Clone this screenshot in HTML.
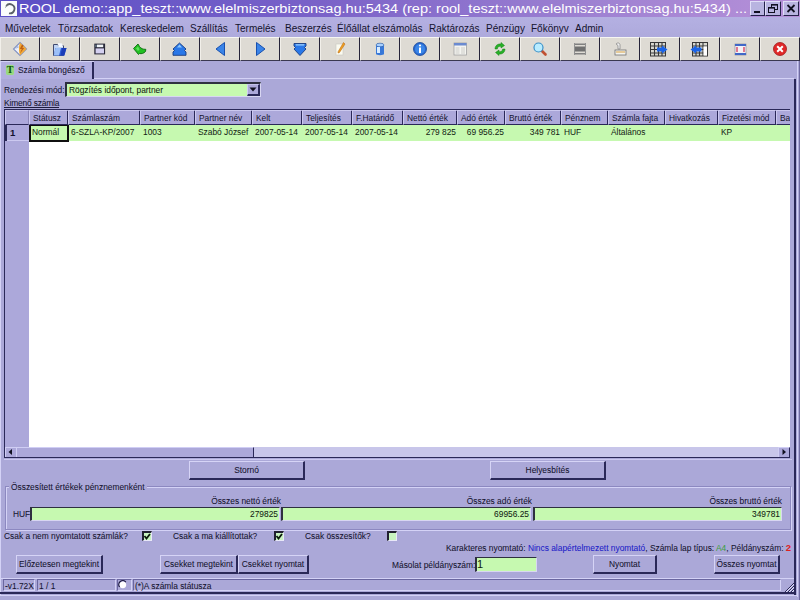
<!DOCTYPE html>
<html><head><meta charset="utf-8">
<style>
*{margin:0;padding:0;box-sizing:border-box}
html,body{width:800px;height:600px;overflow:hidden;background:#aba8d8;font-family:"Liberation Sans",sans-serif}
.a{position:absolute}
.t{position:absolute;font-size:8.4px;line-height:10px;color:#14132e;white-space:nowrap;-webkit-text-stroke:0.05px currentColor}
.btn{position:absolute;background:#aba8d8;border-top:1px solid #d6d4f6;border-left:1px solid #d6d4f6;border-right:2px solid #2a2858;border-bottom:2px solid #2a2858;font-size:8.4px;color:#14132e;text-align:center;line-height:16px;white-space:nowrap;-webkit-text-stroke:0.05px currentColor}
.tb{position:absolute;top:37px;width:40px;height:24px;background:#dedbd4;border-top:1px solid #f6f6f2;border-left:1px solid #f2f0ea;border-right:1px solid #26243a;border-bottom:1px solid #3a3850}
.tb svg{position:absolute;left:11px;top:4px}
.fld{position:absolute;background:#c6f9b0;border-top:1px solid #2e3040;border-left:2px solid #2e3040;border-bottom:1px solid #d8d6f2;border-right:1px solid #d8d6f2}
.hd{position:absolute;top:110px;height:15px;background:#aca8da;border-top:1px solid #ccc9f0;border-left:1px solid #ccc9f0;border-right:2px solid #2a2858;border-bottom:1px solid #2a2858}
.hd span{position:absolute;left:3px;top:2px;font-size:8.4px;line-height:10px;color:#14132e;white-space:nowrap}
.cell{position:absolute;top:127px;font-size:8.4px;line-height:10px;color:#122212;white-space:nowrap}
.cb{position:absolute;top:531px;width:10px;height:10px;background:#c8f4c0;border-top:2px solid #202030;border-left:2px solid #202030;border-right:1px solid #e8e8f8;border-bottom:1px solid #e8e8f8}
</style></head><body>

<!-- title bar -->
<div class="a" style="left:0;top:0;width:800px;height:17px;background:linear-gradient(to right,#5a4fc6 0%,#7a62c8 40%,#9f82d2 75%,#b690d8 100%)"></div>
<div class="a" style="left:1px;top:1px;width:16px;height:15px;background:#fafcfc"></div>
<svg class="a" style="left:1px;top:1px" width="16" height="15" viewBox="0 0 16 15"><path d="M5.2 5 A4.6 4.6 0 1 1 8 12.3" fill="none" stroke="#5a6068" stroke-width="1.8"/><path d="M4 6.5 L6.5 4.5" stroke="#8a9098" stroke-width="1"/></svg>
<div class="a" style="left:19px;top:2px;font-size:12px;line-height:14px;color:#fff;white-space:nowrap;transform-origin:0 0;transform:scaleX(1.211)">ROOL demo::app_teszt::www.elelmiszerbiztonsag.hu:5434 (rep: rool_teszt::www.elelmiszerbiztonsag.hu:5434) ...</div>
<div class="a" style="left:750px;top:1px;width:15px;height:15px;background:#b8b4e0;border-top:1px solid #e0def8;border-left:1px solid #e0def8;border-right:1px solid #24224a;border-bottom:1px solid #24224a"></div>
<div class="a" style="left:754px;top:11px;width:6px;height:2px;background:#101020"></div>
<div class="a" style="left:765px;top:1px;width:16px;height:15px;background:#b8b4e0;border-top:1px solid #e0def8;border-left:1px solid #e0def8;border-right:1px solid #24224a;border-bottom:1px solid #24224a"></div>
<svg class="a" style="left:765px;top:1px" width="16" height="15"><rect x="6.5" y="3.5" width="6" height="5" fill="none" stroke="#101020" stroke-width="1"/><rect x="6" y="3" width="7" height="1.6" fill="#101020"/><rect x="3.5" y="6.5" width="6" height="5" fill="#b8b4e0" stroke="#101020" stroke-width="1"/><rect x="3" y="6" width="7" height="1.6" fill="#101020"/></svg>
<div class="a" style="left:783px;top:1px;width:16px;height:15px;background:#b8b4e0;border-top:1px solid #e0def8;border-left:1px solid #e0def8;border-right:1px solid #24224a;border-bottom:1px solid #24224a"></div>
<svg class="a" style="left:783px;top:1px" width="16" height="15"><path d="M4.5 4 L11.5 11 M11.5 4 L4.5 11" stroke="#101020" stroke-width="1.8"/></svg>

<!-- menu bar -->
<div class="a" style="left:0;top:17px;width:800px;height:20px;background:linear-gradient(#b4b0e2,#aeaadc)"></div>
<div class="a" style="left:0;top:24px;font-size:10px;line-height:10px;color:#14132e;white-space:nowrap">
<span class="a" style="left:5px">Műveletek</span><span class="a" style="left:58px">Törzsadatok</span><span class="a" style="left:120px">Kereskedelem</span><span class="a" style="left:190px">Szállítás</span><span class="a" style="left:235px">Termelés</span><span class="a" style="left:285px">Beszerzés</span><span class="a" style="left:337px">Élőállat elszámolás</span><span class="a" style="left:429px">Raktározás</span><span class="a" style="left:486px">Pénzügy</span><span class="a" style="left:531px">Főkönyv</span><span class="a" style="left:575px">Admin</span>
</div>

<!-- toolbar -->
<div class="tb" style="left:0px"></div>
<svg class="a" style="left:12px;top:41px;overflow:visible" width="16" height="16" viewBox="0 0 16 16"><path d="M8 1.5 L14.5 8 L8 14.5 L1.5 8 Z" fill="#eef2fc" stroke="#8090c0" stroke-width="1.1"/><path d="M8.2 1.8 L14.5 8 L8.2 14.2 C6.5 12 6.5 4 8.2 1.8 Z" fill="#f0a838"/><path d="M10 3.5 L7.8 8 L9.8 8 L8 12.5 L12.2 7 L10.3 7 L11.5 4.5 Z" fill="#c06010"/><path d="M3 8 L6 4.5 L6.8 6.5 Z" fill="#a8b8e0"/></svg>
<div class="tb" style="left:40px"></div>
<svg class="a" style="left:52px;top:41px;overflow:visible" width="16" height="16" viewBox="0 0 16 16"><path d="M1.5 3.5 H5.5 L6.5 4.8 H11.5 V14.5 H1.5 Z" fill="#c0d4f4" stroke="#404a70" stroke-width="1"/><path d="M6 2 L10 2.5 L11 6 L6.5 6 Z" fill="#f4f8ff"/><path d="M3.5 7 H14.5 L12.3 14.5 H1.8 Z" fill="#2e5ed8"/><path d="M3.5 7 H9 L7 14.5 H1.8 Z" fill="#9cc0f8"/><path d="M10 7 H14.5 L12.3 14.5 H8.5 Z" fill="#1a3cb8"/></svg>
<div class="tb" style="left:80px"></div>
<svg class="a" style="left:92px;top:41px;overflow:visible" width="16" height="16" viewBox="0 0 16 16"><rect x="2.3" y="2.6" width="10.8" height="10.8" fill="#282838"/><rect x="5" y="3.6" width="6.2" height="2.6" fill="#f0f4f8"/><rect x="3.4" y="3.6" width="1.2" height="2.6" fill="#7890a0"/><rect x="3.6" y="7.4" width="8.4" height="5" fill="#d4d0f0"/></svg>
<div class="tb" style="left:120px"></div>
<svg class="a" style="left:132px;top:41px;overflow:visible" width="16" height="16" viewBox="0 0 16 16"><path d="M1.5 7.5 L6 3 L7.5 5.5 C9 7.5 11 8.5 13.8 8.3 L13.5 10.5 C11.5 12.5 9.5 13 7.5 12.5 L6.5 13.5 Z" fill="#22c022" stroke="#0c6a10" stroke-width="0.9"/><path d="M4 7.5 L6 5.5 L7.5 8.5 L6 10 Z" fill="#60e060"/></svg>
<div class="tb" style="left:160px"></div>
<svg class="a" style="left:172px;top:41px;overflow:visible" width="16" height="16" viewBox="0 0 16 16"><path d="M7.5 2 L14 8 L12.5 9.5 L14 11 L14 14.3 L1 14.3 L1 11 L2.5 9.5 L1 8 Z" fill="#2a78e8" stroke="#1a3c80" stroke-width="0.9"/><path d="M7.5 3.5 L10 6.5 L5 6.5 Z" fill="#8cc8ff"/></svg>
<div class="tb" style="left:200px"></div>
<svg class="a" style="left:212px;top:41px;overflow:visible" width="16" height="16" viewBox="0 0 16 16"><path d="M12.5 1.5 L12.5 14.5 L4 8 Z" fill="#3a84e8" stroke="#1850b0" stroke-width="1"/></svg>
<div class="tb" style="left:240px"></div>
<svg class="a" style="left:252px;top:41px;overflow:visible" width="16" height="16" viewBox="0 0 16 16"><path d="M4.5 1.5 L4.5 14.5 L13 8 Z" fill="#3a84e8" stroke="#1850b0" stroke-width="1"/></svg>
<div class="tb" style="left:280px"></div>
<svg class="a" style="left:292px;top:41px;overflow:visible" width="16" height="16" viewBox="0 0 16 16"><path d="M2 2.5 L14 2.5 L14 5 L12.5 6.5 L14 8 L8 14.5 L2 8 L3.5 6.5 L2 5 Z" fill="#2a78e8" stroke="#1a3c80" stroke-width="0.9"/><path d="M3.5 3.3 L12.5 3.3 L12 4.5 L4 4.5 Z" fill="#9cd0ff"/></svg>
<div class="tb" style="left:320px"></div>
<svg class="a" style="left:332px;top:41px;overflow:visible" width="16" height="16" viewBox="0 0 16 16"><rect x="4" y="3" width="7" height="11" fill="#fafaf0" stroke="#c8c8c0" stroke-width="0.6"/><path d="M11.5 1.5 L13 3 L7.5 11.5 L6 12 L6.2 10.5 Z" fill="#f0a020" stroke="#b06010" stroke-width="0.5"/></svg>
<div class="tb" style="left:360px"></div>
<svg class="a" style="left:372px;top:41px;overflow:visible" width="16" height="16" viewBox="0 0 16 16"><path d="M4 4 L4 13 C4 14.5 12 14.5 12 13 L12 4 Z" fill="#3878d8"/><ellipse cx="8" cy="4" rx="4" ry="1.8" fill="#a8d0ff" stroke="#2050a0" stroke-width="0.6"/><rect x="5" y="6" width="3" height="6" fill="#d8ecff"/></svg>
<div class="tb" style="left:400px"></div>
<svg class="a" style="left:412px;top:41px;overflow:visible" width="16" height="16" viewBox="0 0 16 16"><circle cx="8" cy="8" r="6.5" fill="#2868d0" stroke="#184898" stroke-width="0.8"/><circle cx="8" cy="8" r="5" fill="#3a86e8"/><rect x="7" y="6.5" width="2" height="5.5" fill="#fff"/><circle cx="8" cy="4.5" r="1.1" fill="#fff"/></svg>
<div class="tb" style="left:440px"></div>
<svg class="a" style="left:452px;top:41px;overflow:visible" width="16" height="16" viewBox="0 0 16 16"><rect x="2" y="2" width="12.5" height="12" fill="#f4f4f0" stroke="#a0a0a0" stroke-width="0.8"/><rect x="2" y="2" width="12.5" height="2.5" fill="#6a8ad0"/><rect x="3.5" y="6" width="4" height="7" fill="#e0e0dc"/><rect x="9" y="6" width="4" height="7" fill="#e0e0dc"/></svg>
<div class="tb" style="left:480px"></div>
<svg class="a" style="left:492px;top:41px;overflow:visible" width="16" height="16" viewBox="0 0 16 16"><path d="M3 8 C3 4.5 6 2.5 9 3 L9 1.5 L12.5 4.5 L9 7 L9 5.3 C7 5 5.5 6 5.3 8 Z" fill="#28b028" stroke="#108010" stroke-width="0.5"/><path d="M13 8 C13 11.5 10 13.5 7 13 L7 14.5 L3.5 11.5 L7 9 L7 10.7 C9 11 10.5 10 10.7 8 Z" fill="#28b028" stroke="#108010" stroke-width="0.5"/></svg>
<div class="tb" style="left:520px"></div>
<svg class="a" style="left:532px;top:41px;overflow:visible" width="16" height="16" viewBox="0 0 16 16"><path d="M9.5 9.5 L13.5 13.5" stroke="#c05030" stroke-width="2.6" stroke-linecap="round"/><circle cx="6.5" cy="6.5" r="4.5" fill="#b8ecff" stroke="#3a90c8" stroke-width="1.2"/></svg>
<div class="tb" style="left:560px"></div>
<svg class="a" style="left:572px;top:41px;overflow:visible" width="16" height="16" viewBox="0 0 16 16"><rect x="2" y="2.5" width="12" height="1.5" fill="#808080"/><rect x="2" y="5.5" width="12" height="5" fill="#707070"/><rect x="2" y="12" width="12" height="1.5" fill="#808080"/><rect x="2" y="2" width="1" height="12" fill="#909090"/><rect x="13" y="2" width="1" height="12" fill="#909090"/></svg>
<div class="tb" style="left:600px"></div>
<svg class="a" style="left:612px;top:41px;overflow:visible" width="16" height="16" viewBox="0 0 16 16"><rect x="3" y="9" width="11" height="5" fill="#f4f4f0" stroke="#707070" stroke-width="0.8"/><rect x="4" y="10.5" width="9" height="1" fill="#d8a040"/><path d="M4 3 C5 1.5 8 1.5 8 4 L8 8 L6 8 L6 4.5 Z" fill="#f0f0f0" stroke="#808080" stroke-width="0.7"/></svg>
<div class="tb" style="left:640px"></div>
<svg class="a" style="left:651px;top:41px;overflow:visible" width="16" height="16" viewBox="0 0 16 16"><rect x="-0.5" y="1.5" width="15" height="13.5" fill="#d8d8d0" stroke="#383838" stroke-width="1"/><path d="M-0.5 5 H14.5 M-0.5 8.5 H14.5 M-0.5 12 H14.5 M3.5 1.5 V15 M7.5 1.5 V15 M11 1.5 V15" stroke="#383838" stroke-width="1.1"/><path d="M6 6.5 L11 6.5 L11 4.5 L16.5 8.5 L11 12.5 L11 10.5 L6 10.5 Z" fill="#1a64e8"/></svg>
<div class="tb" style="left:680px"></div>
<svg class="a" style="left:691px;top:41px;overflow:visible" width="16" height="16" viewBox="0 0 16 16"><rect x="1.5" y="1.5" width="15" height="13.5" fill="#d8d8d0" stroke="#383838" stroke-width="1"/><path d="M1.5 5 H16.5 M1.5 8.5 H16.5 M1.5 12 H16.5 M5 1.5 V15 M8.5 1.5 V15 M12 1.5 V15" stroke="#383838" stroke-width="1.1"/><rect x="12.5" y="5.5" width="3.5" height="9" fill="#fff"/><path d="M10.5 6.5 L5 6.5 L5 4.5 L-0.5 8.5 L5 12.5 L5 10.5 L10.5 10.5 Z" fill="#1a64e8"/></svg>
<div class="tb" style="left:720px"></div>
<svg class="a" style="left:732px;top:41px;overflow:visible" width="16" height="16" viewBox="0 0 16 16"><rect x="3" y="3" width="11" height="11" fill="#f4f0f4" stroke="#808090" stroke-width="0.6"/><rect x="3" y="3" width="11" height="2" fill="#4068c8"/><rect x="3" y="12" width="11" height="2" fill="#4068c8"/><rect x="4" y="6" width="2" height="5" fill="#e07890"/><rect x="11" y="6" width="2" height="5" fill="#e07890"/></svg>
<div class="tb" style="left:760px"></div>
<svg class="a" style="left:772px;top:41px;overflow:visible" width="16" height="16" viewBox="0 0 16 16"><circle cx="8" cy="8" r="6.5" fill="#e02828" stroke="#a01818" stroke-width="0.8"/><path d="M5.2 5.2 L10.8 10.8 M10.8 5.2 L5.2 10.8" stroke="#fff" stroke-width="2"/></svg>

<!-- frame lines -->
<div class="a" style="left:0;top:61px;width:1px;height:534px;background:#d4d2f6"></div>
<div class="a" style="left:797px;top:61px;width:1px;height:536px;background:#d4d2f6"></div>
<div class="a" style="left:799px;top:61px;width:1px;height:539px;background:#6e6aa0"></div>
<div class="a" style="left:794px;top:79px;width:2px;height:516px;background:#2a2858"></div>
<div class="a" style="left:0;top:592px;width:796px;height:2px;background:#2a2858"></div>
<div class="a" style="left:0;top:595px;width:798px;height:1px;background:#d4d2f6"></div>

<!-- tab -->
<div class="a" style="left:1px;top:61px;width:93px;height:18px;background:#b2aee0;border-top:1px solid #d4d2f6"></div>
<div class="a" style="left:92px;top:62px;width:2px;height:17px;background:#2a2858"></div>
<div class="a" style="left:94px;top:78px;width:700px;height:1px;background:#d4d2f6"></div>
<div class="a" style="left:6px;top:65px;width:8px;height:10px;background:#98d880;border-radius:2px;box-shadow:0 0 1px #b0e8a0"></div>
<div class="a" style="left:6px;top:65px;width:8px;font-family:'Liberation Serif',serif;font-weight:bold;font-size:10px;line-height:10px;color:#0c500c;text-align:center">T</div>
<div class="t" style="left:18px;top:65px">Számla böngésző</div>

<!-- sort combo -->
<div class="t" style="left:4px;top:85px">Rendezési mód:</div>
<div class="fld" style="left:65px;top:82px;width:196px;height:15px;border-top-width:2px"></div>
<div class="t" style="left:69px;top:85px;color:#122212">Rögzítés időpont, partner</div>
<div class="a" style="left:247px;top:84px;width:13px;height:12px;background:#aca8da;border-top:1px solid #c4c2ea;border-left:1px solid #d0cef4;border-right:2px solid #2a2858;border-bottom:2px solid #2a2858"></div>
<svg class="a" style="left:248px;top:84px" width="10" height="10"><path d="M1.5 3.5 L8.5 3.5 L5 7.5 Z" fill="#101020"/></svg>

<div class="t" style="left:4px;top:98px;letter-spacing:-0.15px">Kimenő számla</div>
<div class="a" style="left:4px;top:107px;width:55px;height:1px;background:#1e1d3e"></div>

<!-- grid -->
<div class="a" style="left:4px;top:109px;width:786px;height:349px;background:#fff;overflow:hidden">
<div class="a" style="left:0;top:0;width:786px;height:1px;background:#2a2858"></div>
<div class="a" style="left:0;top:0;width:1px;height:349px;background:#2a2858"></div>
<div class="a" style="left:1px;top:1px;width:24px;height:337px;background:#aca8da"></div>
<div class="a" style="left:1px;top:1px;width:24px;height:15px;background:#aca8da;border-top:1px solid #ccc9f0;border-left:1px solid #ccc9f0;border-right:1px solid #8a86b8;border-bottom:1px solid #2a2858"></div>
<div class="a" style="left:1px;top:16px;width:24px;height:16px;background:#aca8da;border-bottom:1px solid #ccc9f0"></div>
<div class="a" style="left:1px;top:16px;width:2px;height:16px;background:#2a2858"></div>
<div class="a" style="left:6px;top:19px;font-size:9.6px;line-height:10px;font-weight:bold;color:#14132e">1</div>
<div class="hd" style="left:25px;top:1px;width:40px"><span>Státusz</span></div>
<div class="hd" style="left:64px;top:1px;width:73px"><span>Számlaszám</span></div>
<div class="hd" style="left:136px;top:1px;width:56px"><span>Partner kód</span></div>
<div class="hd" style="left:191px;top:1px;width:58px"><span>Partner név</span></div>
<div class="hd" style="left:248px;top:1px;width:51px"><span>Kelt</span></div>
<div class="hd" style="left:298px;top:1px;width:51px"><span>Teljesítés</span></div>
<div class="hd" style="left:348px;top:1px;width:52px"><span>F.Határidő</span></div>
<div class="hd" style="left:399px;top:1px;width:55px"><span>Nettó érték</span></div>
<div class="hd" style="left:453px;top:1px;width:49px"><span>Adó érték</span></div>
<div class="hd" style="left:501px;top:1px;width:57px"><span>Bruttó érték</span></div>
<div class="hd" style="left:557px;top:1px;width:48px"><span>Pénznem</span></div>
<div class="hd" style="left:604px;top:1px;width:58px"><span>Számla fajta</span></div>
<div class="hd" style="left:661px;top:1px;width:54px"><span>Hivatkozás</span></div>
<div class="hd" style="left:714px;top:1px;width:59px"><span>Fizetési mód</span></div>
<div class="hd" style="left:772px;top:1px;width:45px"><span>Ba</span></div>
<div class="a" style="left:25px;top:16px;width:761px;height:16px;background:#c6f9b0"></div>
<div class="cell" style="left:28px;top:18px">Normál</div>
<div class="cell" style="left:67px;top:18px">6-SZLA-KP/2007</div>
<div class="cell" style="left:139px;top:18px">1003</div>
<div class="cell" style="left:194px;top:18px">Szabó József</div>
<div class="cell" style="left:251px;top:18px">2007-05-14</div>
<div class="cell" style="left:301px;top:18px">2007-05-14</div>
<div class="cell" style="left:351px;top:18px">2007-05-14</div>
<div class="cell" style="left:399px;top:18px;width:53px;text-align:right">279 825</div>
<div class="cell" style="left:453px;top:18px;width:47px;text-align:right">69 956.25</div>
<div class="cell" style="left:501px;top:18px;width:55px;text-align:right">349 781</div>
<div class="cell" style="left:560px;top:18px">HUF</div>
<div class="cell" style="left:607px;top:18px">Általános</div>
<div class="cell" style="left:717px;top:18px">KP</div>
<div class="a" style="left:25px;top:16px;width:40px;height:17px;border:2px solid #101010;border-top-width:1px"></div>
<div class="a" style="left:1px;top:338px;width:786px;height:11px;background:#c8c6ea"></div>
<div class="a" style="left:1px;top:348px;width:786px;height:2px;background:#2a2858"></div>
<div class="a" style="left:1px;top:338px;width:12px;height:10px;background:#aca8da;border-top:1px solid #d0cef4;border-left:1px solid #d0cef4;border-right:1px solid #2a2858"></div>
<svg class="a" style="left:1px;top:338px" width="12" height="10"><path d="M3.5 5 L7 2 L7 8 Z" fill="#101020"/></svg>
<div class="a" style="left:12px;top:338px;width:238px;height:10px;background:#aca8da;border-top:1px solid #d0cef4;border-left:1px solid #d0cef4;border-right:1px solid #2a2858"></div>
<div class="a" style="left:774px;top:338px;width:12px;height:10px;background:#aca8da;border-top:1px solid #d0cef4;border-left:1px solid #d0cef4;border-right:1px solid #2a2858"></div>
<svg class="a" style="left:774px;top:338px" width="12" height="10"><path d="M8 5 L4.5 2 L4.5 8 Z" fill="#101020"/></svg>
</div>

<!-- buttons -->
<div class="a" style="left:4px;top:459px;width:788px;height:1px;background:#ccc9f0"></div>
<div class="btn" style="left:189px;top:461px;width:116px;height:19px">Stornó</div>
<div class="btn" style="left:490px;top:461px;width:116px;height:19px">Helyesbítés</div>

<!-- group box -->
<div class="a" style="left:5px;top:486px;width:786px;height:44px;border:1px solid #8c88c0;box-shadow:inset 1px 1px 0 #d4d2f6, 1px 1px 0 #d4d2f6"></div>
<div class="t" style="left:9px;top:482px;padding:0 2px;background:#aba8d8">Összesített értékek pénznemenként</div>
<div class="t" style="left:131px;top:496px;width:150px;text-align:right">Összes nettó érték</div>
<div class="t" style="left:382px;top:496px;width:150px;text-align:right">Összes adó érték</div>
<div class="t" style="left:632px;top:496px;width:150px;text-align:right">Összes bruttó érték</div>
<div class="t" style="left:13px;top:509px">HUF</div>
<div class="fld" style="left:30px;top:507px;width:250px;height:14px"></div>
<div class="t" style="left:30px;top:509px;width:248px;text-align:right;color:#122212">279825</div>
<div class="fld" style="left:281px;top:507px;width:250px;height:14px"></div>
<div class="t" style="left:281px;top:509px;width:248px;text-align:right;color:#122212">69956.25</div>
<div class="fld" style="left:533px;top:507px;width:249px;height:14px"></div>
<div class="t" style="left:533px;top:509px;width:247px;text-align:right;color:#122212">349781</div>
<div class="t" style="left:4px;top:530.5px">Csak a nem nyomtatott számlák?</div>
<div class="cb" style="left:142px"></div><svg class="a" style="left:143px;top:532px" width="9" height="9"><path d="M1.5 4 L3.5 6.5 L7 2" fill="none" stroke="#0a1a0a" stroke-width="1.8"/></svg>
<div class="t" style="left:173px;top:530.5px">Csak a ma kiállítottak?</div>
<div class="cb" style="left:274px"></div><svg class="a" style="left:275px;top:532px" width="9" height="9"><path d="M1.5 4 L3.5 6.5 L7 2" fill="none" stroke="#0a1a0a" stroke-width="1.8"/></svg>
<div class="t" style="left:305px;top:530.5px">Csak összesítők?</div>
<div class="cb" style="left:387px"></div>
<div class="t" style="left:446px;top:543px">Karakteres nyomtató: <span style="color:#2020c8">Nincs alapértelmezett nyomtató</span>, Számla lap típus: <span style="color:#40a040">A4</span>, Példányszám: <span style="color:#e02020;font-weight:bold;font-size:9.5px">2</span></div>
<div class="btn" style="left:16px;top:555px;width:87px;height:19px">Előzetesen megtekint</div>
<div class="btn" style="left:160px;top:555px;width:78px;height:19px">Csekket megtekint</div>
<div class="btn" style="left:238px;top:555px;width:71px;height:19px">Csekket nyomtat</div>
<div class="btn" style="left:593px;top:555px;width:64px;height:19px">Nyomtat</div>
<div class="btn" style="left:714px;top:555px;width:66px;height:19px">Összes nyomtat</div>
<div class="t" style="left:392px;top:560px;width:83px;text-align:right">Másolat példányszám:</div>
<div class="fld" style="left:475px;top:557px;width:62px;height:15px"></div>
<div class="t" style="left:477px;top:558px;font-size:11px;line-height:12px;color:#122212">1</div>
<div class="a" style="left:1px;top:578px;width:793px;height:1px;background:#d4d2f6"></div>
<div class="a" style="left:3px;top:579px;width:32px;height:12px;border-top:1px solid #6a66a0;border-left:1px solid #6a66a0;border-right:1px solid #d4d2f6;border-bottom:1px solid #d4d2f6"></div>
<div class="t" style="left:5px;top:581px">-v1.72X</div>
<div class="a" style="left:37px;top:579px;width:79px;height:12px;border-top:1px solid #6a66a0;border-left:1px solid #6a66a0;border-right:1px solid #d4d2f6;border-bottom:1px solid #d4d2f6"></div>
<div class="t" style="left:39px;top:581px">1 / 1</div>
<div class="a" style="left:133px;top:579px;width:648px;height:12px;border-top:1px solid #6a66a0;border-left:1px solid #6a66a0;border-right:1px solid #d4d2f6;border-bottom:1px solid #d4d2f6"></div>
<div class="t" style="left:135px;top:581px">(*)A számla státusza</div>
<div class="a" style="left:117px;top:579px;width:15px;height:12px;border-top:1px solid #6a66a0;border-left:1px solid #6a66a0;border-right:1px solid #d4d2f6;border-bottom:1px solid #d4d2f6"></div>
<svg class="a" style="left:118px;top:579px" width="13" height="12"><circle cx="4.8" cy="5.8" r="3.4" fill="#fff"/><path d="M1.6 8 A3.6 3.6 0 0 1 7.8 3.2" fill="none" stroke="#1c1a40" stroke-width="1.2"/></svg>
<svg class="a" style="left:783px;top:581px" width="12" height="12"><path d="M11 2 L2 11 M11 5 L5 11 M11 8 L8 11" stroke="#2a2858" stroke-width="1"/><path d="M11 3 L3 11 M11 6 L6 11 M11 9 L9 11" stroke="#e0def8" stroke-width="1"/></svg>

</body></html>
